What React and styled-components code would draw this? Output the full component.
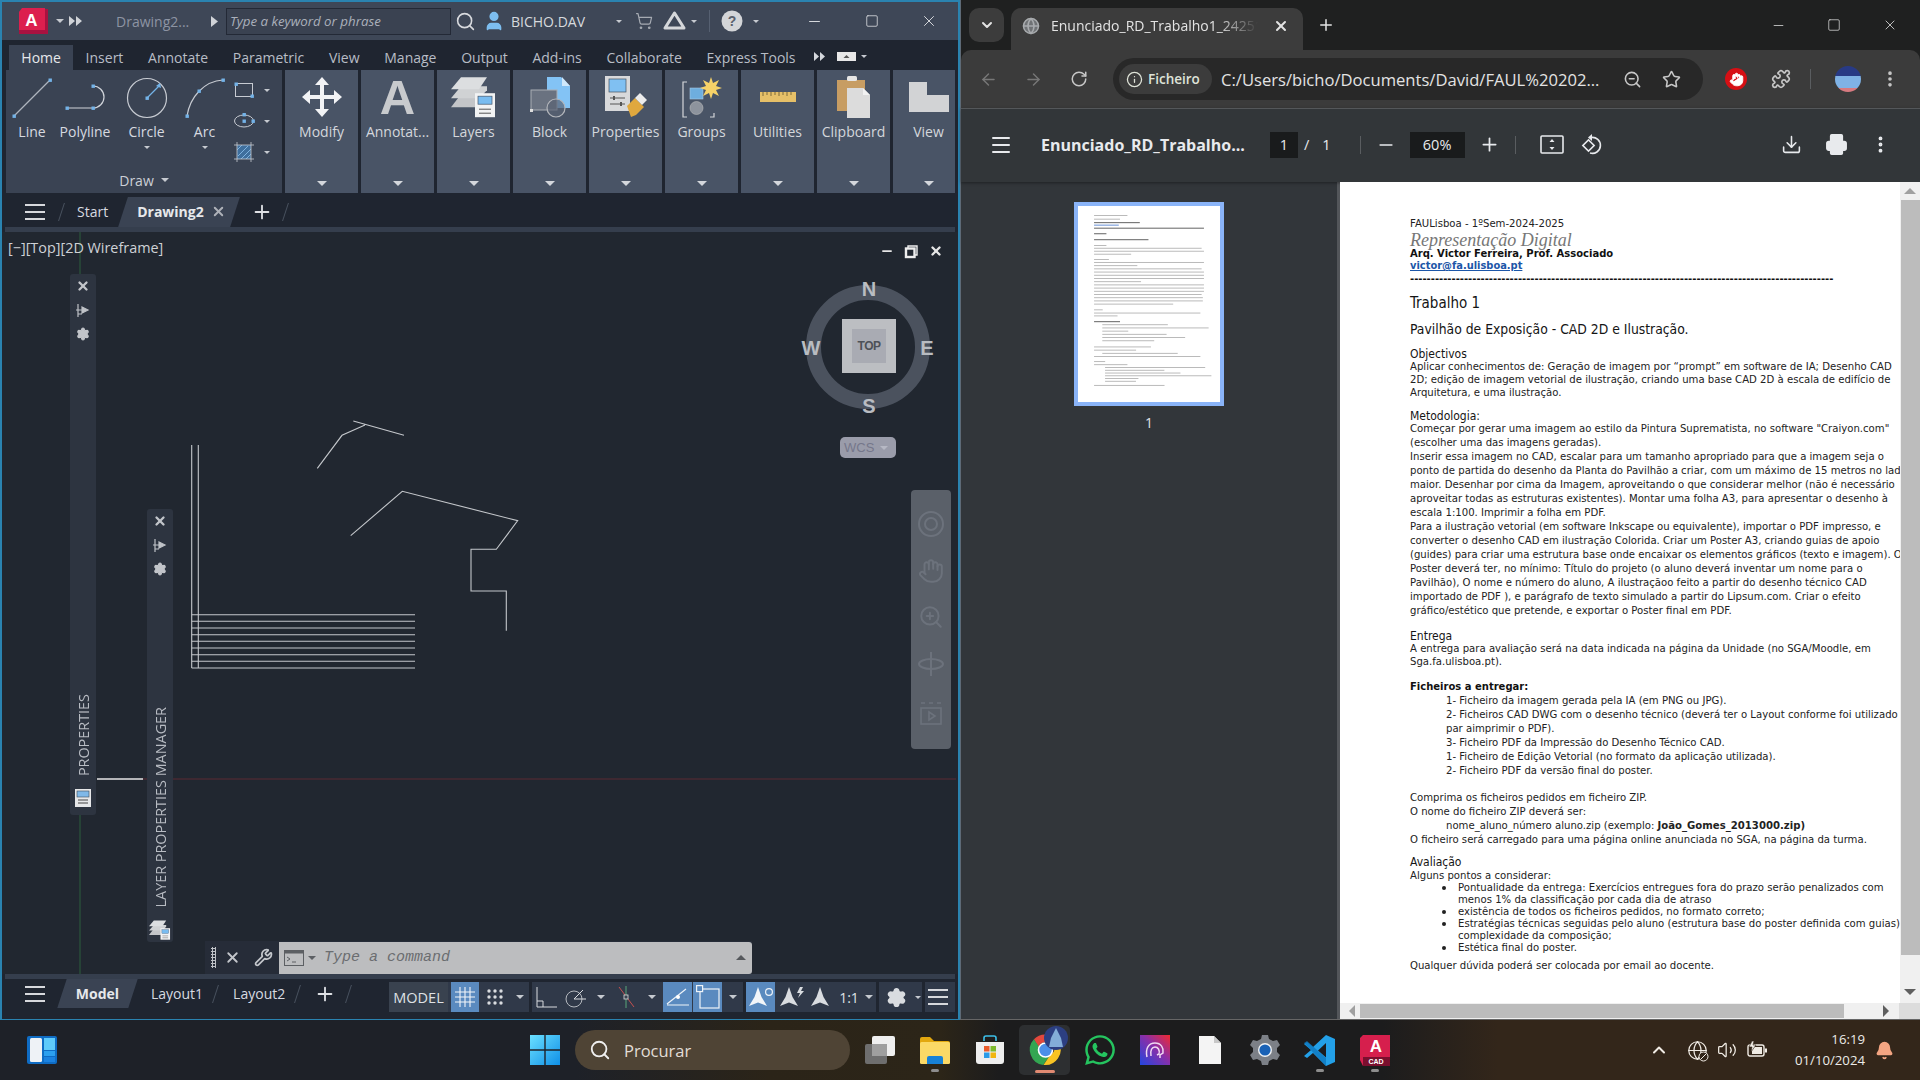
import React from "react";
import styled, { createGlobalStyle } from "styled-components";
import {
  ArrowLeft, ArrowRight, RotateCw, Info, ZoomOut, Star, Puzzle, MoreVertical, Menu, Minus, Plus, Download,
  Printer, ChevronDown, X, Search, Volume2, Bell, ChevronUp, Square, Wrench, ShoppingCart, User, Hand, ZoomIn, Settings, Globe,
} from "lucide-react";
import { FaWhatsapp } from "react-icons/fa";

const GlobalStyle = createGlobalStyle`
  html, body { margin: 0; padding: 0; background: #1e2128; overflow: hidden; }
  * { box-sizing: border-box; }
  body { font-family: "Open Sans", "Noto Sans", sans-serif; }
`;

const UI = `"Open Sans", "Noto Sans", sans-serif`;

// ---------- document text of the pdf, one entry per line ----------
const doc = [
  { t: "FAULisboa - 1ºSem-2024-2025", h: 13, mt: 35 },
  { t: "Representação Digital", h: 19, kind: "title" },
  { t: "Arq. Victor Ferreira, Prof. Associado", h: 10, kind: "bold" },
  { t: "victor@fa.ulisboa.pt", h: 13, kind: "link" },
  { t: "-".repeat(102), h: 13, kind: "bold" },
  { t: "Trabalho 1", h: 20, mt: 7.5, kind: "h0" },
  { t: "Pavilhão de Exposição - CAD 2D e Ilustração.", h: 20, mt: 6, kind: "h1" },
  { t: "Objectivos", h: 13, mt: 9.5, kind: "h2" },
  { t: "Aplicar conhecimentos de: Geração de imagem por “prompt” em software de IA; Desenho CAD", h: 13, mt: -1 },
  { t: "2D; edição de imagem vetorial de ilustração, criando uma base CAD 2D à escala de edifício de", h: 13 },
  { t: "Arquitetura, e uma ilustração.", h: 13 },
  { t: "Metodologia:", h: 14, mt: 9.5, kind: "h2" },
  { t: "Começar por gerar uma imagem ao estilo da Pintura Suprematista, no software \"Craiyon.com\"", h: 14, mt: -1 },
  { t: "(escolher uma das imagens geradas).", h: 14 },
  { t: "Inserir essa imagem no CAD, escalar para um tamanho apropriado para que a imagem seja o", h: 14 },
  { t: "ponto de partida do desenho da Planta do Pavilhão a criar, com um máximo de 15 metros no lado", h: 14 },
  { t: "maior. Desenhar por cima da Imagem, aproveitando o que considerar melhor (não é necessário", h: 14 },
  { t: "aproveitar todas as estruturas existentes). Montar uma folha A3, para apresentar o desenho à", h: 14 },
  { t: "escala 1:100. Imprimir a folha em PDF.", h: 14 },
  { t: "Para a ilustração vetorial (em software Inkscape ou equivalente), importar o PDF impresso, e", h: 14 },
  { t: "converter o desenho CAD em ilustração Colorida. Criar um Poster A3, criando guias de apoio", h: 14 },
  { t: "(guides) para criar uma estrutura base onde encaixar os elementos gráficos (texto e imagem). O", h: 14 },
  { t: "Poster deverá ter, no mínimo: Título do projeto (o aluno deverá inventar um nome para o", h: 14 },
  { t: "Pavilhão), O nome e número do aluno, A ilustraçãoo feito a partir do desenho técnico CAD", h: 14 },
  { t: "importado de PDF ), e parágrafo de texto simulado a partir do Lipsum.com. Criar o efeito", h: 14 },
  { t: "gráfico/estético que pretende, e exportar o Poster final em PDF.", h: 14 },
  { t: "Entrega", h: 14, mt: 11, kind: "h2" },
  { t: "A entrega para avaliação será na data indicada na página da Unidade (no SGA/Moodle, em", h: 12.5, mt: 0.75 },
  { t: "Sga.fa.ulisboa.pt).", h: 12.5 },
  { t: "Ficheiros a entregar:", h: 14, mt: 11.25, kind: "bold" },
  { t: "1- Ficheiro da imagem gerada pela IA (em PNG ou JPG).", h: 14, indent: 36 },
  { t: "2- Ficheiros CAD DWG com o desenho técnico (deverá ter o Layout conforme foi utilizado", h: 14, indent: 36 },
  { t: "par aimprimir o PDF).", h: 14, indent: 36 },
  { t: "3- Ficheiro PDF da Impressão do Desenho Técnico CAD.", h: 14, indent: 36 },
  { t: "1- Ficheiro de Edição Vetorial (no formato da aplicação utilizada).", h: 14, indent: 36 },
  { t: "2- Ficheiro PDF da versão final do poster.", h: 14, indent: 36 },
  { t: "Comprima os ficheiros pedidos em ficheiro ZIP.", h: 14, mt: 13 },
  { t: "O nome do ficheiro ZIP deverá ser:", h: 14 },
  { t: "nome_aluno_número aluno.zip (exemplo: ", b: "João_Gomes_2013000.zip)", h: 14, indent: 36 },
  { t: "O ficheiro será carregado para uma página online anunciada no SGA, na página da turma.", h: 14 },
  { t: "Avaliação", h: 14, mt: 8, kind: "h2" },
  { t: "Alguns pontos a considerar:", h: 13 },
  { t: "Pontualidade da entrega: Exercícios entregues fora do prazo serão penalizados com", h: 12, indent: 48, bullet: true },
  { t: "menos 1% da classificação por cada dia de atraso", h: 12, indent: 48 },
  { t: "existência de todos os ficheiros pedidos, no formato correto;", h: 12, indent: 48, bullet: true },
  { t: "Estratégias técnicas seguidas pelo aluno (estrutura base do poster definida com guias)", h: 12, indent: 48, bullet: true },
  { t: "complexidade da composição;", h: 12, indent: 48 },
  { t: "Estética final do poster.", h: 12, indent: 48, bullet: true },
  { t: "Qualquer dúvida poderá ser colocada por email ao docente.", h: 14, mt: 5 },
];

// ---------- overall frame ----------
const Desktop = styled.div`
  width: 1920px;
  height: 1080px;
  display: flex;
  flex-direction: column;
  overflow: hidden;
`;
const Windows = styled.div`
  display: flex;
  height: 1020px;
`;

// ---------- cad window ----------
const CadWindow = styled.div`
  width: 960px;
  display: flex;
  flex-direction: column;
  background: #1f2530;
  border: 2px solid #2a83b0;
  border-width: 2px 2px 1px 2px;
  color: #d5d8dd;
  font-family: ${UI};
`;
const TitleBar = styled.div`
  height: 38px;
  flex: none;
  display: flex;
  align-items: center;
  background: #3e4757;
  position: relative;
`;
const At = styled.div`
  position: relative;
  display: flex;
  align-items: center;
  flex: none;
  margin-left: ${(p) => p.$ml ?? 0}px;
  color: ${(p) => p.$c ?? "inherit"};
`;
const DocName = styled.span`
  margin-left: 33px;
  width: 76px;
  font-size: 14px;
  color: #8d94a3;
`;
const SearchBox = styled.div`
  margin-left: 8px;
  width: 225px;
  height: 27px;
  padding-left: 3px;
  border: 1px solid #232936;
  background: #3a4251;
  color: #aab0bb;
  font-size: 13.3px;
  font-style: italic;
  line-height: 24px;
  white-space: nowrap;
`;
const UserName = styled.span`
  margin-left: 6px;
  width: 102px;
  font-size: 14px;
  color: #d7dade;
`;
const Caret = styled.i`
  display: block;
  flex: none;
  width: 0;
  height: 0;
  border-left: ${(p) => p.$s ?? 4}px solid transparent;
  border-right: ${(p) => p.$s ?? 4}px solid transparent;
  border-top: ${(p) => p.$s ?? 4}px solid ${(p) => p.$c ?? "#c6cad0"};
  margin-left: ${(p) => p.$ml ?? 0}px;
  margin-top: ${(p) => p.$mt ?? 0}px;
  transform: ${(p) => (p.$up ? "rotate(180deg)" : "none")};
`;
const TitleSep = styled.i`
  display: block;
  width: 1px;
  height: 22px;
  margin-left: 12px;
  background: #566071;
`;
const RibbonTabs = styled.div`
  height: 30px;
  flex: none;
  display: flex;
  align-items: flex-end;
  padding-left: 7px;
`;
const RibbonTab = styled.div`
  height: 25px;
  padding: 0 12.35px;
  font-size: 14px;
  line-height: 25px;
  white-space: nowrap;
  color: ${(p) => (p.$on ? "#e6e8eb" : "#b8bdc6")};
  background: ${(p) => (p.$on ? "#3a4353" : "transparent")};
`;
const RibbonExtra = styled.div`
  height: 25px;
  display: flex;
  align-items: center;
  padding-bottom: ${(p) => p.$pb ?? 4}px;
`;
const Ribbon = styled.div`
  height: 124px;
  flex: none;
  display: flex;
  gap: 3px;
  padding: 0 3px 1px 4px;
`;
const DrawPanel = styled.div`
  width: 276px;
  background: #3a4353;
  display: flex;
  flex-direction: column;
  position: relative;
`;
const DrawTools = styled.div`
  flex: 1;
  display: flex;
  padding-top: 6px;
`;
const DrawTool = styled.div`
  width: ${(p) => p.$w}px;
  display: flex;
  flex-direction: column;
  align-items: center;
  font-size: 14px;
  color: #d7dae0;
  gap: 2px;
`;
const ToolIcon = styled.div`
  height: 44px;
  display: flex;
  align-items: center;
  justify-content: center;
`;
const MiniTools = styled.div`
  display: flex;
  flex-direction: column;
  gap: 9px;
  margin-left: 6px;
  padding-top: 3px;
`;
const MiniTool = styled.div`
  display: flex;
  align-items: center;
  gap: 10px;
  height: 22px;
`;
const PanelLabel = styled.div`
  height: 23px;
  display: flex;
  align-items: center;
  justify-content: center;
  gap: 7px;
  font-size: 14px;
  color: #ccd0d6;
  padding-bottom: 3px;
`;
const FlatPanel = styled.div`
  width: ${(p) => p.$w ?? 73}px;
  background: #495466;
  display: flex;
  flex-direction: column;
  align-items: center;
  padding: 5px 0 0 ${(p) => p.$pl ?? 0}px;
  font-size: 14px;
  color: #d4d7dc;
  white-space: nowrap;
`;
const FlatIcon = styled.div`
  height: 44px;
  display: flex;
  align-items: center;
  justify-content: center;
  margin-bottom: 3px;
`;
const FlatCaret = styled.div`
  margin-top: auto;
  padding-bottom: 7px;
`;
const BigLetter = styled.span`
  font: 700 49px/44px "Liberation Sans", sans-serif;
  color: #c8cacd;
`;
const DocTabs = styled.div`
  height: 33px;
  flex: none;
  display: flex;
  align-items: center;
  padding: 2px 0 0 23px;
  font-size: 14px;
`;
const BurgerIcon = styled.div`
  display: flex;
  flex-direction: column;
  gap: 5px;
  width: ${(p) => p.$w ?? 20}px;
  flex: none;
  i {
    display: block;
    height: 2px;
    background: #d6d8dc;
  }
`;
const Slash = styled.i`
  display: block;
  flex: none;
  width: 1px;
  height: 18px;
  background: #49525f;
  transform: skewX(-18deg);
  margin-left: ${(p) => p.$ml ?? 0}px;
`;
const SkewTab = styled.div`
  position: relative;
  flex: none;
  width: ${(p) => p.$w}px;
  height: ${(p) => p.$h ?? 30}px;
  margin-left: ${(p) => p.$ml ?? 0}px;
  display: flex;
  align-items: center;
  justify-content: ${(p) => (p.$center ? "center" : "flex-start")};
  padding-left: ${(p) => (p.$center ? 0 : 14)}px;
  font-size: 14px;
  color: #e6e8eb;
  font-weight: ${(p) => (p.$on ? 700 : 400)};
  &::before {
    content: "";
    position: absolute;
    inset: 0;
    background: ${(p) => (p.$on ? "#3a4353" : "transparent")};
    transform: skewX(-18deg);
  }
  > * { position: relative; }
`;
const PlainTab = styled.span`
  flex: none;
  margin-left: ${(p) => p.$ml ?? 0}px;
  color: #d7dae0;
  font-size: 14px;
`;
const Strip = styled.div`
  height: 5px;
  flex: none;
  margin: 0 3px;
  background: #353e4d;
`;

// ---------- drawing area ----------
const Viewport = styled.div`
  flex: 1;
  position: relative;
  background: #212730;
  overflow: hidden;
`;
const Drawing = styled.svg`
  position: absolute;
  inset: 0;
  width: 100%;
  height: 100%;
`;
const ViewLabel = styled.div`
  position: absolute;
  left: 6px;
  top: 6px;
  font-size: 14.4px;
  color: #cfd2d7;
`;
const ViewControls = styled.div`
  position: absolute;
  left: 878px;
  top: 12px;
  display: flex;
  gap: 11px;
  align-items: center;
  color: #e6e6e6;
`;
const CubeRing = styled.div`
  position: absolute;
  left: 804px;
  top: 53px;
  width: 124px;
  height: 124px;
  border-radius: 50%;
  border: 15px solid #4b525e;
`;
const CubeDir = styled.span`
  position: absolute;
  left: ${(p) => p.$x}px;
  top: ${(p) => p.$y}px;
  transform: translate(-50%, -50%);
  font: 700 20px "Liberation Sans", sans-serif;
  color: #b9bcc1;
`;
const CubeFace = styled.div`
  position: absolute;
  left: 840px;
  top: 87px;
  width: 54px;
  height: 54px;
  background: #bcbec2;
  display: flex;
  align-items: center;
  justify-content: center;
`;
const CubeInner = styled.div`
  width: 34px;
  height: 34px;
  background: #a9abb3;
  display: flex;
  align-items: center;
  justify-content: center;
  font: 700 12px "Liberation Sans", sans-serif;
  letter-spacing: -0.5px;
  color: #4d5158;
`;
const WcsButton = styled.div`
  position: absolute;
  left: 838px;
  top: 205px;
  width: 56px;
  height: 21px;
  background: #9a9caa;
  border-radius: 5px;
  display: flex;
  align-items: center;
  padding-left: 4px;
  gap: 6px;
  font: 13px "Liberation Sans", sans-serif;
  color: #75778a;
`;
const NavBar3d = styled.div`
  position: absolute;
  left: 909px;
  top: 258px;
  width: 40px;
  height: 259px;
  background: #5a6069;
  border-radius: 4px;
  display: flex;
  flex-direction: column;
  align-items: center;
  gap: 20px;
  padding-top: 20px;
  color: #6c727c;
`;
const Palette = styled.div`
  position: absolute;
  left: ${(p) => p.$x}px;
  top: ${(p) => p.$y}px;
  width: 26px;
  height: ${(p) => p.$h}px;
  background: #2d3440;
  border-radius: 3px;
  display: flex;
  flex-direction: column;
  align-items: center;
  color: #c2c5ca;
`;
const PaletteBtn = styled.div`
  height: 24px;
  display: flex;
  align-items: center;
  justify-content: center;
`;
const PaletteTitle = styled.div`
  margin-top: auto;
  writing-mode: vertical-rl;
  transform: rotate(180deg);
  font-size: 14.4px;
  color: #b8bcc3;
  white-space: nowrap;
`;
const PaletteFoot = styled.div`
  margin: 13px 0 ${(p) => p.$pb ?? 4}px;
  height: 22px;
`;
const CommandLine = styled.div`
  position: absolute;
  left: 203px;
  top: 709px;
  height: 33px;
  display: flex;
  align-items: center;
  background: #262c38;
  color: #c3c6cb;
`;
const Grip = styled.div`
  width: 5px;
  height: 21px;
  margin: 0 8px 0 6px;
  background-image: radial-gradient(#bfc2c7 1px, transparent 1.2px);
  background-size: 3px 3px;
`;
const CommandInput = styled.div`
  width: 473px;
  height: 32px;
  margin-left: 6px;
  background: #bcbdbf;
  display: flex;
  align-items: center;
  gap: 4px;
  padding: 0 6px 0 5px;
  border-radius: 0 3px 3px 0;
  font: italic 15px "Liberation Mono", monospace;
  color: #6b6d70;
`;
const CommandText = styled.span`
  margin-left: 4px;
  flex: 1;
`;

// ---------- status bar ----------
const StatusBar = styled.div`
  height: 40px;
  flex: none;
  display: flex;
  padding: 0 3px 0 23px;
`;
const LayoutTabs = styled.div`
  height: 29px;
  display: flex;
  align-items: center;
`;
const StatusGroups = styled.div`
  margin-left: auto;
  height: 36px;
  display: flex;
  gap: 3px;
  align-items: center;
`;
const StatusGroup = styled.div`
  display: flex;
  align-items: center;
  height: 30px;
  background: #303949;
  padding: ${(p) => p.$pad ?? "0"};
`;
const StatusCell = styled.div`
  width: ${(p) => p.$w ?? 28}px;
  height: 30px;
  flex: none;
  display: flex;
  align-items: center;
  justify-content: center;
  font-size: ${(p) => p.$fs ?? 14}px;
  color: #dfe1e5;
  background: ${(p) => (p.$on ? "#5a8abf" : p.$dark ? "#39424f" : "transparent")};
  margin-left: ${(p) => p.$ml ?? 0}px;
`;

// ---------- browser window ----------
const Browser = styled.div`
  width: 960px;
  display: flex;
  flex-direction: column;
  background: #1f2020;
  border-left: 1px solid #5e6a76;
  border-bottom: 1px solid #666;
  color: #e3e3e3;
  font-family: ${UI};
`;
const TabStrip = styled.div`
  height: 50px;
  flex: none;
  display: flex;
  padding: 8px 0 0 8px;
`;
const TabMenu = styled.div`
  width: 35px;
  height: 34px;
  border-radius: 10px;
  background: #3c3c3c;
  display: flex;
  align-items: center;
  justify-content: center;
`;
const Tab = styled.div`
  width: 292px;
  height: 42px;
  margin-left: 7px;
  border-radius: 10px 10px 0 0;
  background: #3c3c3c;
  display: flex;
  align-items: center;
  padding: 0 14px 7px 11px;
  font-size: 14px;
`;
const TabTitle = styled.span`
  margin-left: 11px;
  width: 218px;
  flex: none;
  white-space: nowrap;
  mask-image: linear-gradient(90deg, #000 76%, transparent 95%);
`;
const TabPlus = styled.div`
  height: 34px;
  margin-left: 14px;
  display: flex;
  align-items: center;
`;
const WinButtons = styled.div`
  margin-left: auto;
  display: flex;
  align-items: center;
  gap: 41px;
  padding: 0 22px 8px 0;
  color: #e6e6e6;
`;
const NavRow = styled.div`
  height: 58px;
  flex: none;
  display: flex;
  align-items: center;
  background: #3b3b3b;
  border-radius: 10px 10px 0 0;
  padding-left: 5px;
  color: #c7c7c7;
`;
const NavBtn = styled.div`
  width: ${(p) => p.$w ?? 45}px;
  flex: none;
  display: flex;
  align-items: center;
  justify-content: center;
  margin-left: ${(p) => p.$ml ?? 0}px;
  color: ${(p) => p.$c ?? "inherit"};
`;
const Omnibox = styled.div`
  width: 590px;
  height: 42px;
  margin-left: 12px;
  border-radius: 21px;
  background: #282828;
  display: flex;
  align-items: center;
  padding: 0 8px 0 6px;
`;
const SiteChip = styled.div`
  width: 93px;
  height: 30px;
  border-radius: 15px;
  background: #3c3c3c;
  display: flex;
  align-items: center;
  gap: 5px;
  padding-left: 7px;
  font-size: 13.5px;
  font-weight: 600;
  color: #dfe3d8;
`;
const UrlText = styled.span`
  margin-left: 9px;
  width: 392px;
  flex: none;
  font-size: 16.6px;
  color: #e3e3e3;
  white-space: nowrap;
`;
const ToolSep = styled.i`
  display: block;
  width: 1px;
  height: ${(p) => p.$h ?? 20}px;
  margin-left: ${(p) => p.$ml ?? 0}px;
  background: #5a5d60;
  flex: none;
`;
const Avatar = styled.div`
  width: 26px;
  height: 26px;
  margin-left: 24px;
  border-radius: 50%;
  background: linear-gradient(180deg, #283a85 0 40%, #7fb2e6 40% 85%, #d77a80 85%);
  flex: none;
`;
const StopBadge = styled.div`
  width: 22px;
  height: 22px;
  border-radius: 50%;
  background: #d60f14;
  color: #fff;
  display: flex;
  align-items: center;
  justify-content: center;
`;
const PdfBar = styled.div`
  height: 74px;
  flex: none;
  display: flex;
  align-items: center;
  background: #323639;
  border-top: 1px solid #54575a;
  box-shadow: 0 1px 3px rgba(0, 0, 0, 0.4);
  position: relative;
  color: #e8eaed;
  padding: 0 0 2px 28px;
`;
const PdfTitle = styled.span`
  margin-left: 28px;
  width: 229px;
  flex: none;
  font-size: 16px;
  font-weight: 700;
  color: #e8eaed;
  white-space: nowrap;
`;
const ValueBox = styled.span`
  width: ${(p) => p.$w}px;
  height: 26px;
  flex: none;
  margin-left: ${(p) => p.$ml ?? 0}px;
  background: #191b1c;
  display: flex;
  align-items: center;
  justify-content: center;
  font-size: 14.5px;
`;
const PdfPlain = styled.span`
  flex: none;
  font-size: 14.5px;
  margin-left: ${(p) => p.$ml}px;
`;
const PdfIcon = styled.div`
  flex: none;
  display: flex;
  margin-left: ${(p) => p.$ml}px;
  color: #e8eaed;
`;
const PdfBody = styled.div`
  flex: 1;
  display: flex;
  min-height: 0;
`;
const Sidebar = styled.div`
  width: 379px;
  flex: none;
  background: #32363a;
  display: flex;
  flex-direction: column;
  align-items: center;
  padding-top: 20px;
  border-right: 3px solid #53565a;
  color: #e0e2e4;
  font-size: 14px;
  gap: 7px;
`;
const ThumbFrame = styled.div`
  width: 150px;
  height: 204px;
  border: 4px solid #8ab4f8;
  background: #fff;
`;
const PageArea = styled.div`
  flex: 1;
  position: relative;
  overflow: hidden;
  background: #fff;
`;
const Page = styled.div`
  width: 620px;
  padding-left: 70px;
  font-family: "DejaVu Sans", Verdana, sans-serif;
  color: #222;
`;
const COND = `"DejaVu Sans Condensed", "DejaVu Sans", sans-serif`;
const kinds = {
  title: `font: italic 18px "Liberation Serif", serif; color: #777;`,
  bold: `font-weight: 700; color: #111; font-size: 10px;`,
  link: `font-weight: 700; color: #1c56a8; text-decoration: underline; font-size: 9.9px;`,
  h0: `font-family: ${COND}; font-stretch: condensed; font-size: 15px; color: #151515;`,
  h1: `font-family: ${COND}; font-stretch: condensed; font-size: 13.8px; color: #151515;`,
  h2: `font-family: ${COND}; font-stretch: condensed; font-size: 12px; color: #151515;`,
};
const DocLine = styled.div`
  height: ${(p) => p.$h}px;
  line-height: ${(p) => p.$h}px;
  margin-top: ${(p) => p.$mt ?? 0}px;
  padding-left: ${(p) => p.$indent ?? 0}px;
  position: relative;
  white-space: nowrap;
  font-size: 10.12px;
  ${(p) => kinds[p.$kind] ?? ""}
`;
const DocBullet = styled.i`
  position: absolute;
  left: 32px;
  top: 50%;
  width: 4px;
  height: 4px;
  margin-top: -2px;
  border-radius: 50%;
  background: #222;
`;
const VScroll = styled.div`
  position: absolute;
  right: 0;
  top: 0;
  bottom: 16px;
  width: 20px;
  background: #f0f0f0;
  display: flex;
  flex-direction: column;
  align-items: center;
  justify-content: space-between;
  padding: 6px 0 8px;
  &::after {
    content: "";
    position: absolute;
    left: 1px;
    right: 0;
    top: 18px;
    height: 755px;
    background: #bcbcbc;
  }
`;
const HScroll = styled.div`
  position: absolute;
  left: 0;
  right: 0;
  bottom: 0;
  height: 16px;
  background: #f0f0f0;
  display: flex;
  align-items: center;
  justify-content: space-between;
  padding: 0 31px 0 9px;
  &::after {
    content: "";
    position: absolute;
    left: 20px;
    top: 1px;
    bottom: 1px;
    width: 484px;
    background: #bcbcbc;
  }
  &::before {
    content: "";
    position: absolute;
    right: 0;
    top: 0;
    bottom: 0;
    width: 21px;
    background: #dcdcdc;
  }
`;
const Tri = styled.i`
  display: block;
  width: 0;
  height: 0;
  ${(p) => ({
    up: "border-left:6px solid transparent;border-right:6px solid transparent;border-bottom:6px solid #a0a0a0;",
    down: "border-left:6px solid transparent;border-right:6px solid transparent;border-top:6px solid #5f5f5f;",
    left: "border-top:6px solid transparent;border-bottom:6px solid transparent;border-right:6px solid #a0a0a0;",
    right: "border-top:6px solid transparent;border-bottom:6px solid transparent;border-left:6px solid #5f5f5f;",
  })[p.$dir]}
`;

// ---------- taskbar ----------
const Taskbar = styled.div`
  height: 60px;
  flex: none;
  display: flex;
  align-items: center;
  padding-left: 14px;
  background: linear-gradient(90deg, #1e2128 0%, #1e2128 30%, #2b2418 40%, #2c2518 49%, #1c1c1d 52%, #1c1c1d 72%, #33261a 78%, #33261a 100%);
  font-family: ${UI};
  color: #e8e6e3;
`;
const TaskCell = styled.div`
  position: relative;
  width: 55px;
  height: 50px;
  flex: none;
  display: flex;
  align-items: center;
  justify-content: center;
  margin-left: ${(p) => p.$ml ?? 0}px;
  margin-right: ${(p) => p.$mr ?? 0}px;
  ${(p) => p.$active && `
    &::before {
      content: "";
      position: absolute;
      inset: 0 2px;
      background: #2d2f31;
      border-radius: 5px;
    }
  `}
  > * { position: relative; }
`;
const RunDot = styled.i`
  position: absolute;
  left: 50%;
  bottom: ${(p) => (p.$active ? 2 : 3)}px;
  width: ${(p) => (p.$active ? 20 : 8)}px;
  height: 3px;
  margin-left: ${(p) => (p.$active ? -10 : -4)}px;
  border-radius: 2px;
  background: ${(p) => (p.$active ? "#e08a72" : "#8d8d8d")};
`;
const TaskSearch = styled.div`
  width: 275px;
  height: 40px;
  margin-left: 3px;
  flex: none;
  border-radius: 20px;
  background: #4f4435;
  display: flex;
  align-items: center;
  gap: 13px;
  padding-left: 14px;
  font-size: 16.5px;
  color: #e2ded7;
`;
const Tray = styled.div`
  margin-left: auto;
  display: flex;
  align-items: center;
  padding-right: 26px;
  color: #f1ece5;
`;
const Clock = styled.div`
  margin-left: 28px;
  text-align: right;
  font-size: 13.2px;
  line-height: 21px;
  color: #ecebe8;
`;
const GlobeWrap = styled.span`
  display: flex;
  position: relative;
  svg + svg {
    position: absolute;
    right: -1px;
    bottom: -1px;
  }
`;

// ---------- drawn icons ----------
const Px = styled.svg`
  display: block;
  flex: none;
  overflow: visible;
`;
const ACadLogo = () => (
  <Px width="30" height="27" viewBox="0 0 30 27">
    <path d="M3 1h26v25H0V4z" fill="#a81240" />
    <path d="M3 0h23v22H0V4z" fill="#dc1f4e" />
    <text x="12.5" y="18" fontFamily="Liberation Sans" fontWeight="700" fontSize="17" fill="#fff" textAnchor="middle">A</text>
  </Px>
);
const Handle = ({ x, y }) => <rect x={x - 1.5} y={y - 1.5} width="3.4" height="3.4" fill="#74b3e8" />;
const LineIcon = () => (
  <Px width="42" height="42" viewBox="0 0 42 42">
    <line x1="3" y1="39" x2="38" y2="4" stroke="#aeb4be" strokeWidth="1.2" />
    <Handle x={3} y={39} /><Handle x={39} y={3} />
  </Px>
);
const PolyIcon = () => (
  <Px width="42" height="42" viewBox="0 0 42 42">
    <path d="M3 31h26a11 11 0 0 0 0-22" fill="none" stroke="#d0d4da" strokeWidth="1.2" />
    <Handle x={3} y={31} /><Handle x={29} y={31} /><Handle x={29} y={9} />
  </Px>
);
const CircleIcon = () => (
  <Px width="42" height="42" viewBox="0 0 42 42">
    <circle cx="21" cy="21" r="19.5" fill="none" stroke="#c7cbd2" strokeWidth="1.2" />
    <line x1="21" y1="21" x2="34" y2="8" stroke="#74b3e8" strokeWidth="1.2" />
    <Handle x={21} y={21} /><path d="M34 6l1 5-5-2z" fill="#74b3e8" />
  </Px>
);
const ArcIcon = () => (
  <Px width="42" height="42" viewBox="0 0 42 42">
    <path d="M3 39C6 20 20 4 39 3" fill="none" stroke="#c7cbd2" strokeWidth="1.2" />
    <Handle x={3} y={39} /><Handle x={15} y={14} /><Handle x={39} y={3} />
  </Px>
);
const RectMini = () => (
  <Px width="20" height="16" viewBox="0 0 20 16">
    <rect x="1.5" y="1.5" width="17" height="13" fill="none" stroke="#c7cbd2" />
    <Handle x={2} y={2} /><Handle x={18} y={14} />
  </Px>
);
const EllipseMini = () => (
  <Px width="20" height="16" viewBox="0 0 20 16">
    <ellipse cx="10" cy="8" rx="9.5" ry="6" fill="none" stroke="#c7cbd2" />
    <Handle x={10} y={8} /><Handle x={10} y={1.5} /><Handle x={19} y={8} />
  </Px>
);
const HatchMini = () => (
  <Px width="20" height="20" viewBox="0 0 20 20">
    <rect x="3" y="3" width="14" height="14" fill="#3f6f9d" />
    <path d="M4 14L14 4M7 17L17 7M3 8L8 3M12 17l5-5" stroke="#7fb2de" strokeWidth="1" />
    <path d="M3 0v20M17 0v20M0 3h20M0 17h20" stroke="#c7cbd2" strokeWidth="0.8" />
  </Px>
);
const MoveIcon = () => (
  <Px width="40" height="40" viewBox="0 0 40 40">
    <path d="M20 0l7 8h-5v10h10v-5l8 7-8 7v-5H22v10h5l-7 8-7-8h5V22H8v5l-8-7 8-7v5h10V8h-5z" fill="#f2f3f5" />
  </Px>
);
const LayersIcon = ({ size = 46 }) => (
  <Px width={size} height={size * 0.9} viewBox="0 0 46 41">
    <path d="M0 31L10 18h26v4L28 31z" fill="#c3c5c8" />
    <path d="M0 22L10 10h26v4L28 22z" fill="#d0d2d4" />
    <path d="M0 13L10 1h26L28 13z" fill="#dcdee0" />
    <rect x="24" y="17" width="20" height="24" fill="#f2f3f4" />
    <rect x="27" y="20" width="14" height="8" fill="#79bcf0" stroke="#44556a" strokeWidth="0.7" />
    <path d="M28 33h12M28 37h12" stroke="#555" />
  </Px>
);
const BlockIcon = () => (
  <Px width="40" height="41" viewBox="0 0 40 41">
    <path d="M17 0h14l9 9v22H17z" fill="#83c3f5" />
    <path d="M32 0l8 9h-8z" fill="#cfe8fb" />
    <rect x="1" y="13" width="26" height="20" fill="#6a7280" stroke="#a9adb3" />
    <circle cx="26" cy="31" r="9" fill="#5a6373" fillOpacity="0.7" stroke="#b3b6bb" strokeWidth="1.2" />
    <rect x="0" y="32" width="3" height="3" fill="#ddd" />
  </Px>
);
const PropsIcon = () => (
  <Px width="42" height="42" viewBox="0 0 42 42">
    <rect x="0" y="0" width="25" height="35" fill="#d8d9db" />
    <rect x="4" y="3" width="17" height="13" fill="#80c0f2" stroke="#45525f" strokeWidth="0.7" />
    <path d="M5 22h15M5 28h15" stroke="#555" /><rect x="8" y="20" width="2" height="4" fill="#555" /><rect x="15" y="26" width="2" height="4" fill="#555" />
    <path d="M22 30l8-8 9 9-8 8-5 2z" fill="#e0a83e" /><path d="M30 22l5-5 7 7-5 5z" fill="#ececec" />
  </Px>
);
const GroupsIcon = () => (
  <Px width="40" height="40" viewBox="0 0 40 40">
    <path d="M5 5H1v35h4M28 40h4v-4" fill="none" stroke="#d4d6d9" strokeWidth="1.2" />
    <rect x="8" y="11" width="13" height="11" fill="#6eaede" stroke="#a4c8e4" strokeWidth="0.6" />
    <circle cx="14.5" cy="31" r="6.5" fill="#8d939d" stroke="#bbb" strokeWidth="0.6" />
    <path d="M29 0l2 6 6-3-3 6 6 2-6 2 3 6-6-3-2 6-2-6-6 3 3-6-6-2 6-2-3-6 6 3z" fill="#f6d268" />
  </Px>
);
const RulerIcon = () => (
  <Px width="36" height="10" viewBox="0 0 36 10">
    <rect width="36" height="10" fill="#e6c068" />
    <path d="M3 0v4M7 0v3M11 0v4M15 0v3M19 0v4M23 0v3M27 0v4M31 0v3" stroke="#7d6a3a" />
  </Px>
);
const ClipIcon = () => (
  <Px width="34" height="42" viewBox="0 0 34 42">
    <rect x="0" y="4" width="28" height="31" fill="#c79d63" />
    <rect x="10" y="0" width="10" height="5" rx="1.5" fill="#e6e6e6" />
    <path d="M10 12h16l7 7v23H10z" fill="#dcdcdc" /><path d="M26 12l7 7h-7z" fill="#f2f2f2" />
  </Px>
);
const ViewIcon = () => (
  <Px width="40" height="30" viewBox="0 0 40 30">
    <path d="M0 0h18v13h22v17H0z" fill="#d2d3d5" />
  </Px>
);
const ShareIcon = () => (
  <Px width="25" height="22" viewBox="0 0 25 22">
    <path d="M12.5 3L3 18h19z" fill="none" stroke="#d5d7da" strokeWidth="3" strokeLinejoin="round" />
  </Px>
);
const HelpIcon = () => (
  <Px width="22" height="22" viewBox="0 0 22 22">
    <circle cx="11" cy="11" r="10.5" fill="#d3d5d8" />
    <text x="11" y="16" fontFamily="Liberation Sans" fontWeight="700" fontSize="14" fill="#59606c" textAnchor="middle">?</text>
  </Px>
);
const Restore = () => (
  <Px width="13" height="13" viewBox="0 0 13 13">
    <path d="M3 3V1h9v9h-2" fill="none" stroke="#eee" strokeWidth="1.4" />
    <rect x="1" y="3.5" width="8.5" height="8.5" fill="none" stroke="#eee" strokeWidth="2.4" />
  </Px>
);
const GearSolid = ({ size = 14, c = "#c2c5ca" }) => <Settings size={size} color={c} fill={c} strokeWidth={2} />;
const PinIcon = () => (
  <Px width="14" height="13" viewBox="0 0 14 13">
    <path d="M2 0v13M0 6h8M6 3l6 3-6 3zM2 10h4" stroke="#bfc2c7" strokeWidth="1.2" fill="#bfc2c7" />
  </Px>
);
const SavePal = () => (
  <Px width="16" height="18" viewBox="0 0 16 18">
    <rect width="16" height="18" fill="#e6e7e9" />
    <rect x="2" y="2" width="12" height="6" fill="#7fb8e8" stroke="#3d4a58" strokeWidth="0.6" />
    <path d="M3 11h10M3 14h10" stroke="#444" />
  </Px>
);
const TermIcon = () => (
  <Px width="20" height="16" viewBox="0 0 20 16">
    <rect x="0.5" y="0.5" width="19" height="15" fill="none" stroke="#5c5f63" />
    <rect x="0.5" y="0.5" width="19" height="3" fill="#5c5f63" />
    <path d="M3 7l3 2-3 2M8 12h4" fill="none" stroke="#5c5f63" />
  </Px>
);
const GridIcon = () => (
  <Px width="20" height="20" viewBox="0 0 20 20">
    <path d="M5 0v20M10 0v20M15 0v20M0 5h20M0 10h20M0 15h20" stroke="#f2f5f9" strokeWidth="1.1" />
  </Px>
);
const DotGrid = () => (
  <Px width="16" height="16" viewBox="0 0 16 16" fill="#d9dce0">
    {[2, 8, 14].flatMap((y) => [2, 8, 14].map((x) => <circle key={`${x}-${y}`} cx={x} cy={y} r="1.7" />))}
  </Px>
);
const OrthoIcon = () => (
  <Px width="21" height="21" viewBox="0 0 21 21">
    <path d="M1 0v20h20M1 14h6v6" fill="none" stroke="#d9dce0" />
  </Px>
);
const PolarIcon = () => (
  <Px width="21" height="21" viewBox="0 0 21 21">
    <circle cx="9" cy="12" r="8" fill="none" stroke="#b5b9bf" />
    <path d="M9 12L18 3M9 12h12" stroke="#d9dce0" />
  </Px>
);
const OsnapIcon = () => (
  <Px width="17" height="22" viewBox="0 0 17 22">
    <path d="M8 0v22" stroke="#59a67a" /><path d="M1 1l15 20" stroke="#c4504f" />
    <rect x="6" y="9" width="4" height="4" fill="#39424f" stroke="#ddd" strokeWidth="0.8" />
  </Px>
);
const IsoIcon = () => (
  <Px width="24" height="20" viewBox="0 0 24 20">
    <path d="M1 17L20 2M1 18h22" stroke="#eef3f8" strokeWidth="1.2" /><circle cx="12" cy="10" r="2" fill="#fff" />
  </Px>
);
const SnapBox = () => (
  <Px width="24" height="24" viewBox="0 0 24 24">
    <rect x="4" y="4" width="19" height="19" fill="none" stroke="#eef3f8" strokeWidth="1.2" />
    <rect x="0.6" y="0.6" width="6" height="6" fill="#5a8abf" stroke="#eef3f8" strokeWidth="1.2" />
  </Px>
);
const AnnoIcon = ({ extra, c = "#d9dce0" }) => (
  <Px width="26" height="24" viewBox="0 0 26 24">
    <path d="M10 2l3.5 10L19 21l-9-3.5L1 21l5.5-9z" fill={c} />
    {extra === "circle" && <circle cx="21" cy="7" r="3.4" fill="none" stroke="#eef3f8" strokeWidth="1.2" />}
    {extra === "bolt" && <path d="M21 2l-3 6h3l-2 5 6-7h-3l2-4z" fill={c} />}
  </Px>
);
const TaskWidgets = () => (
  <Px width="30" height="28" viewBox="0 0 30 28">
    <rect width="30" height="28" rx="2" fill="#0f6cc4" />
    <rect x="3" y="2" width="12" height="24" rx="1.5" fill="#eef2f6" />
    <rect x="17" y="2" width="11" height="12" fill="#5fcbfb" />
    <rect x="17" y="15" width="11" height="5" fill="#2ca0ef" />
    <rect x="17" y="21" width="11" height="5" fill="#1b82e0" />
  </Px>
);
const StartIcon = () => (
  <Px width="30" height="30" viewBox="0 0 30 30">
    <defs>
      <linearGradient id="stg" x1="0" y1="0" x2="1" y2="1"><stop offset="0" stopColor="#6be0ff" /><stop offset="1" stopColor="#0f8fe6" /></linearGradient>
    </defs>
    <path d="M0 0h14.3v14.3H0zM15.7 0H30v14.3H15.7zM0 15.7h14.3V30H0zM15.7 15.7H30V30H15.7z" fill="url(#stg)" />
  </Px>
);
const TaskViewIcon = () => (
  <Px width="30" height="28" viewBox="0 0 30 28">
    <rect x="0" y="8" width="22" height="20" rx="2" fill="#6e6e6e" />
    <rect x="7" y="0" width="23" height="20" rx="2" fill="#efefef" />
    <rect x="7" y="8" width="15" height="12" fill="#9f9f9f" />
  </Px>
);
const FolderIcon = () => (
  <Px width="30" height="27" viewBox="0 0 30 27">
    <path d="M0 2a2 2 0 0 1 2-2h8l4 4h14a2 2 0 0 1 2 2v4H0z" fill="#e3a80f" />
    <rect y="5" width="30" height="22" rx="1.5" fill="#fbd966" />
    <path d="M7 27v-6a2 2 0 0 1 2-2h12a2 2 0 0 1 2 2v6z" fill="#1781d6" />
  </Px>
);
const StoreIcon = () => (
  <Px width="30" height="30" viewBox="0 0 30 30">
    <path d="M9 6V3a2 2 0 0 1 2-2h8a2 2 0 0 1 2 2v3" fill="none" stroke="#3cbfe8" strokeWidth="1.6" />
    <path d="M1 7h28v19a3 3 0 0 1-3 3H4a3 3 0 0 1-3-3z" fill="#eeeeee" />
    <rect x="9" y="11" width="5.5" height="5.5" fill="#ea5b2a" /><rect x="15.5" y="11" width="5.5" height="5.5" fill="#7db92c" />
    <rect x="9" y="17.5" width="5.5" height="5.5" fill="#2a9be8" /><rect x="15.5" y="17.5" width="5.5" height="5.5" fill="#f2b60f" />
  </Px>
);
const ChromeIcon = () => (
  <Px width="46" height="40" viewBox="0 0 46 40">
    <g transform="translate(7.5 -5)">
      <path d="M16 9.5a15.5 15.5 0 0 1 13.4 7.8H16a7.7 7.700 0 0 0-7 4.600L4.400 14.200A15.500 15.500 0 0 1 16 9.500z" fill="#e2483d" />
      <path d="M4.400 14.200A15.500 15.500 0 0 0 13.700 40L20.700 30a7.700 7.700 0 0 1-11-8.100z" fill="#33a652" />
      <path d="M29.400 17.300A15.500 15.500 0 0 1 14 40l6.700-10a7.700 7.700 0 0 0 1.800-12.700z" fill="#f8c324" />
      <circle cx="16" cy="25" r="7" fill="#4c8fe8" stroke="#fff" strokeWidth="1.6" />
    </g>
    <circle cx="34" cy="8" r="12" fill="#2c3f82" />
    <path d="M34 -2l5 10 2 9H27l2-9z" fill="#83add8" />
  </Px>
);
const CloakIcon = () => (
  <Px width="30" height="30" viewBox="0 0 30 30">
    <defs>
      <linearGradient id="clk" x1="0" y1="1" x2="1" y2="0"><stop offset="0" stopColor="#2246e0" /><stop offset="0.55" stopColor="#8a2fa8" /><stop offset="1" stopColor="#f0292f" /></linearGradient>
    </defs>
    <rect width="30" height="30" fill="url(#clk)" />
    <path d="M7 22c-2-9 2-14 8-14s9 5 8 10l-3 2v3M11 21c-1-6 1-9 4-9s5 3 4 7l-2 1" fill="none" stroke="#f0d9f2" strokeWidth="1.5" />
  </Px>
);
const FileIcon = () => (
  <Px width="22" height="28" viewBox="0 0 22 28">
    <path d="M0 0h15l7 7v21H0z" fill="#f4f4f4" /><path d="M15 0l7 7h-7z" fill="#c8c8c8" />
  </Px>
);
const SettingsIcon = () => (
  <Px width="32" height="32" viewBox="0 0 32 32">
    <path d="M13 1h6l1 4 4 2 4-1 3 5-3 3v4l3 3-3 5-4-1-4 2-1 4h-6l-1-4-4-2-4 1-3-5 3-3v-4L1 11l3-5 4 1 4-2z" fill="#7c8087" />
    <circle cx="16" cy="16" r="7" fill="#f0f2f4" />
    <circle cx="16" cy="16" r="5.6" fill="#1a62b6" />
  </Px>
);
const CodeIcon = () => (
  <Px width="31" height="31" viewBox="0 0 31 31">
    <path d="M22 0l9 4v23l-9 4-13-13-6 5-3-2 7-6-7-6 3-2 6 5z" fill="#23a0e8" />
    <path d="M22 8l-8 7.500 8 7z" fill="#1c1d1f" />
    <path d="M0 8l3-2 19 17v8z" fill="#0e75bc" opacity="0.75" />
  </Px>
);
const CadTaskIcon = () => (
  <Px width="30" height="31" viewBox="0 0 30 31">
    <path d="M3 0h27v25H5l-2 6-3-6V3z" fill="#d61f4d" />
    <rect x="3" y="22" width="27" height="9" fill="#7a0f2e" />
    <text x="16" y="17" fontFamily="Liberation Sans" fontWeight="700" fontSize="17" fill="#fff" textAnchor="middle">A</text>
    <text x="16" y="29" fontFamily="Liberation Sans" fontWeight="700" fontSize="7" fill="#fff" textAnchor="middle">CAD</text>
  </Px>
);
const FitIcon = () => (
  <Px width="24" height="20" viewBox="0 0 24 20">
    <rect x="1" y="1" width="22" height="17" rx="1" fill="none" stroke="#e8eaed" strokeWidth="1.6" />
    <path d="M12 4l2.500 3h-5zM12 15l-2.500-3h5z" fill="#e8eaed" />
  </Px>
);
const RotateIcon = () => (
  <Px width="24" height="24" viewBox="0 0 24 24">
    <path d="M11 4.500a8 8 0 1 1-1 15.500" fill="none" stroke="#e8eaed" strokeWidth="1.6" />
    <path d="M12 1l-4 3.500 4 3.500z" fill="#e8eaed" />
    <rect x="4.500" y="8.500" width="8" height="8" transform="rotate(45 8.500 12.500)" fill="none" stroke="#e8eaed" strokeWidth="1.6" />
  </Px>
);
const BatteryIcon = () => (
  <Px width="20" height="18" viewBox="0 0 20 18">
    <rect x="1" y="4" width="16" height="11" rx="2" fill="none" stroke="#f1ece5" strokeWidth="1.4" />
    <rect x="5" y="6" width="10" height="7" fill="#f1ece5" /><rect x="18" y="7.500" width="2" height="4" fill="#f1ece5" />
    <path d="M5 0L2 6h3l-1 5 5-7H6l1-4z" fill="#f1ece5" stroke="#33261a" strokeWidth="0.6" />
  </Px>
);
const BlockedGlobe = () => (
  <GlobeWrap>
    <Globe size={21} strokeWidth={1.4} />
    <svg width="11" height="11" viewBox="0 0 11 11">
      <circle cx="5.500" cy="5.500" r="4.500" fill="#33261a" stroke="#f1ece5" />
      <path d="M2.500 8.500l6-6" stroke="#f1ece5" />
    </svg>
  </GlobeWrap>
);

// thumbnail of the page, drawn as grey bars
const ThumbLines = () => {
  let y = 0;
  const bars = doc.map((l, i) => {
    y += (l.mt ?? 0) + l.h;
    const len = (l.t.length + (l.b ? l.b.length : 0)) * 5.4;
    const dark = l.kind === "bold" || l.kind === "h1" || l.kind === "h0";
    return (
      <rect key={i} x={70 + (l.indent ?? 0)} y={y - l.h / 2 - 2} width={Math.min(len, 480)} height={dark ? 5 : 4}
        fill={l.kind === "link" ? "#5a86d0" : dark ? "#777" : "#b4b4b4"} />
    );
  });
  return (
    <svg width="142" height="196" viewBox="0 0 620 856" aria-hidden="true">
      {bars}
    </svg>
  );
};

const Hatch = () => {
  const ys = [614.7, 621.3, 628, 634.7, 641.3, 648, 654.7, 661.3, 668];
  return ys.map((y) => <line key={y} x1="191.700" y1={y} x2="415" y2={y} stroke="#c4c7cb" strokeWidth="1.100" />);
};

const tabs = ["Home", "Insert", "Annotate", "Parametric", "View", "Manage", "Output", "Add-ins", "Collaborate", "Express Tools"];

const flat = [
  ["Modify", <MoveIcon />],
  ["Annotat...", <BigLetter>A</BigLetter>],
  ["Layers", <LayersIcon />],
  ["Block", <BlockIcon />],
  ["Properties", <PropsIcon />],
  ["Groups", <GroupsIcon />],
  ["Utilities", <RulerIcon />],
  ["Clipboard", <ClipIcon />],
];

function CadApp() {
  return (
    <CadWindow>
      <TitleBar>
        <At $ml={17}><ACadLogo /></At>
        <Caret $ml={7} $s={4} />
        <At $ml={5} $c="#d0d3d8"><svg width="14" height="10" viewBox="0 0 14 10" fill="currentColor"><path d="M0 0l6 5-6 5zM7 0l6 5-6 5z" /></svg></At>
        <DocName>Drawing2...</DocName>
        <At $ml={19}><svg width="7" height="11" viewBox="0 0 7 11" fill="#d0d3d8"><path d="M0 0l7 5.500-7 5.500z" /></svg></At>
        <SearchBox>Type a keyword or phrase</SearchBox>
        <At $ml={4} $c="#d8dade"><Search size={21} strokeWidth={1.8} /></At>
        <At $ml={7} $c="#7dbef0"><User size={22} fill="#7dbef0" strokeWidth={2} /></At>
        <UserName>BICHO.DAV</UserName>
        <Caret $ml={3} $s={3} />
        <At $ml={13} $c="#a6abb3"><ShoppingCart size={18} strokeWidth={1.6} /></At>
        <At $ml={9}><ShareIcon /></At>
        <Caret $ml={4} $s={3} />
        <TitleSep />
        <At $ml={11}><HelpIcon /></At>
        <Caret $ml={10} $s={3} />
        <At $ml={47} $c="#e4e6e9"><Minus size={17} strokeWidth={1.3} /></At>
        <At $ml={42} $c="#e4e6e9"><Square size={14} strokeWidth={1.3} /></At>
        <At $ml={41} $c="#e4e6e9"><X size={18} strokeWidth={1.2} /></At>
      </TitleBar>

      <RibbonTabs>
        {tabs.map((t, i) => <RibbonTab key={t} $on={i === 0}>{t}</RibbonTab>)}
        <RibbonExtra $pb={3}><At $ml={6} $c="#d4d7dc"><svg width="12" height="9" viewBox="0 0 12 9" fill="currentColor"><path d="M0 0l5 4.500-5 4.500zM6 0l5 4.500-5 4.500z" /></svg></At></RibbonExtra>
        <RibbonExtra $pb={3}><At $ml={11}><svg width="19" height="9" viewBox="0 0 19 9"><rect width="19" height="9" fill="#e8e8e8" /><path d="M9.500 3l3 3h-6z" fill="#555" /></svg></At></RibbonExtra>
        <RibbonExtra $pb={2}><Caret $ml={5} $s={3} /></RibbonExtra>
      </RibbonTabs>

      <Ribbon>
        <DrawPanel>
          <DrawTools>
            <DrawTool $w={52}><ToolIcon><LineIcon /></ToolIcon>Line</DrawTool>
            <DrawTool $w={54}><ToolIcon><PolyIcon /></ToolIcon>Polyline</DrawTool>
            <DrawTool $w={69}><ToolIcon><CircleIcon /></ToolIcon>Circle<Caret $s={3} $mt={3} /></DrawTool>
            <DrawTool $w={47}><ToolIcon><ArcIcon /></ToolIcon>Arc<Caret $s={3} $mt={3} /></DrawTool>
            <MiniTools>
              <MiniTool><RectMini /><Caret $s={3} /></MiniTool>
              <MiniTool><EllipseMini /><Caret $s={3} /></MiniTool>
              <MiniTool><HatchMini /><Caret $s={3} /></MiniTool>
            </MiniTools>
          </DrawTools>
          <PanelLabel>Draw <Caret $s={4} /></PanelLabel>
        </DrawPanel>
        {flat.map(([label, icon]) => (
          <FlatPanel key={label}>
            <FlatIcon>{icon}</FlatIcon>
            {label}
            <FlatCaret><Caret $s={5} $c="#d4d7dc" /></FlatCaret>
          </FlatPanel>
        ))}
        <FlatPanel $w={62} $pl={9}>
          <FlatIcon><ViewIcon /></FlatIcon>
          View
          <FlatCaret><Caret $s={5} $c="#d4d7dc" /></FlatCaret>
        </FlatPanel>
      </Ribbon>

      <DocTabs>
        <BurgerIcon><i /><i /><i /></BurgerIcon>
        <Slash $ml={16} />
        <PlainTab $ml={15}>Start</PlainTab>
        <SkewTab $on $w={112} $ml={15}><span>Drawing2</span></SkewTab>
        <At $ml={-24} $c="#aeb2b9"><X size={15} strokeWidth={3} /></At>
        <At $ml={25} $c="#dfe1e5"><Plus size={22} strokeWidth={2} /></At>
        <Slash $ml={12} />
      </DocTabs>
      <Strip />

      <Viewport>
        <Drawing viewBox="2 232 956 742">
          <line x1="80" y1="232" x2="80" y2="974" stroke="#2d5f3d" strokeWidth="1" />
          <line x1="143" y1="779" x2="956" y2="779" stroke="#5c2b33" strokeWidth="1" />
          <line x1="97" y1="779" x2="143" y2="779" stroke="#e6e6e6" strokeWidth="1.400" />
          <g fill="none" stroke="#c4c7cb" strokeWidth="1.100">
            <path d="M191.700 445V668M198.300 445V668" />
            <Hatch />
            <path d="M317.300 468.300L342 435.300L365 425M353.300 421L404 435.300" />
            <path d="M350.700 535.700L402.300 491.300L517.700 520.700L496.300 549.300H471V591H506.300V630.700" />
          </g>
        </Drawing>
        <ViewLabel>[−][Top][2D Wireframe]</ViewLabel>
        <ViewControls>
          <Minus size={14} strokeWidth={3} />
          <Restore />
          <X size={14} strokeWidth={4} />
        </ViewControls>
        <CubeRing />
        <CubeDir $x={867} $y={57}>N</CubeDir>
        <CubeDir $x={867} $y={174}>S</CubeDir>
        <CubeDir $x={925} $y={116}>E</CubeDir>
        <CubeDir $x={809} $y={116}>W</CubeDir>
        <CubeFace><CubeInner>TOP</CubeInner></CubeFace>
        <WcsButton>WCS <Caret $s={4} $c="#b6b8c4" /></WcsButton>
        <NavBar3d>
          <svg width="28" height="28" viewBox="0 0 28 28" fill="none" stroke="currentColor" strokeWidth="2"><circle cx="14" cy="14" r="12" /><circle cx="14" cy="14" r="6" /></svg>
          <Hand size={26} strokeWidth={1.8} />
          <ZoomIn size={26} strokeWidth={1.8} />
          <svg width="28" height="28" viewBox="0 0 28 28" fill="none" stroke="currentColor" strokeWidth="2"><ellipse cx="14" cy="14" rx="12" ry="5" /><path d="M14 2v24" /></svg>
          <svg width="24" height="30" viewBox="0 0 24 30" fill="none" stroke="currentColor" strokeWidth="1.600"><rect x="2" y="10" width="20" height="16" /><path d="M10 14l6 4-6 4zM2 5h4M10 5h4M18 5h4" /></svg>
        </NavBar3d>

        <Palette $x={68} $y={42} $h={541}>
          <PaletteBtn><X size={14} strokeWidth={4} /></PaletteBtn>
          <PaletteBtn><PinIcon /></PaletteBtn>
          <PaletteBtn><GearSolid /></PaletteBtn>
          <PaletteTitle>PROPERTIES</PaletteTitle>
          <PaletteFoot><SavePal /></PaletteFoot>
        </Palette>
        <Palette $x={145} $y={277} $h={433}>
          <PaletteBtn><X size={14} strokeWidth={4} /></PaletteBtn>
          <PaletteBtn><PinIcon /></PaletteBtn>
          <PaletteBtn><GearSolid /></PaletteBtn>
          <PaletteTitle>LAYER PROPERTIES MANAGER</PaletteTitle>
          <PaletteFoot $pb={0}><LayersIcon size={22} /></PaletteFoot>
        </Palette>

        <CommandLine>
          <Grip />
          <X size={17} strokeWidth={2.600} />
          <At $ml={13}><Wrench size={19} strokeWidth={2.200} /></At>
          <CommandInput>
            <TermIcon />
            <Caret $s={4} $c="#5c5f63" />
            <CommandText>Type a command</CommandText>
            <Caret $s={5} $c="#55585c" $up />
          </CommandInput>
        </CommandLine>
      </Viewport>
      <Strip />

      <StatusBar>
        <LayoutTabs>
          <BurgerIcon><i /><i /><i /></BurgerIcon>
          <SkewTab $on $w={71} $h={29} $ml={17} $center><span>Model</span></SkewTab>
          <PlainTab $ml={18}>Layout1</PlainTab>
          <Slash $ml={12} />
          <PlainTab $ml={17}>Layout2</PlainTab>
          <Slash $ml={12} />
          <At $ml={16} $c="#dfe1e5"><Plus size={22} strokeWidth={2} /></At>
          <Slash $ml={12} />
        </LayoutTabs>
        <StatusGroups>
          <StatusGroup>
            <StatusCell $w={59} $dark $fs={14.5}>MODEL</StatusCell>
            <StatusCell $on $w={28} $ml={3}><GridIcon /></StatusCell>
            <StatusCell $w={32}><DotGrid /></StatusCell>
            <StatusCell $w={18}><Caret $s={4} /></StatusCell>
          </StatusGroup>
          <StatusGroup>
            <StatusCell $w={29}><OrthoIcon /></StatusCell>
            <StatusCell $w={29}><PolarIcon /></StatusCell>
            <StatusCell $w={21}><Caret $s={4} /></StatusCell>
            <StatusCell $w={30}><OsnapIcon /></StatusCell>
            <StatusCell $w={22}><Caret $s={4} /></StatusCell>
            <StatusCell $on $w={29}><IsoIcon /></StatusCell>
            <StatusCell $on $w={29} $ml={1}><SnapBox /></StatusCell>
            <StatusCell $w={21}><Caret $s={4} /></StatusCell>
          </StatusGroup>
          <StatusGroup>
            <StatusCell $on $w={29}><AnnoIcon extra="circle" c="#f2f5f9" /></StatusCell>
            <StatusCell $w={34}><AnnoIcon extra="bolt" /></StatusCell>
            <StatusCell $w={28}><AnnoIcon /></StatusCell>
            <StatusCell $w={24} $fs={14}>1:1</StatusCell>
            <StatusCell $w={15}><Caret $s={4} /></StatusCell>
          </StatusGroup>
          <StatusGroup>
            <StatusCell $w={34}><GearSolid size={21} c="#d9dce0" /></StatusCell>
            <StatusCell $w={9}><Caret $s={3} /></StatusCell>
          </StatusGroup>
          <StatusGroup $pad="0 7px 0 3px">
            <BurgerIcon $w={20}><i /><i /><i /></BurgerIcon>
          </StatusGroup>
        </StatusGroups>
      </StatusBar>
    </CadWindow>
  );
}

function ChromeApp() {
  return (
    <Browser>
      <TabStrip>
        <TabMenu><ChevronDown size={16} strokeWidth={3} /></TabMenu>
        <Tab>
          <Globe size={18} color="#a8abae" fill="#6f7275" strokeWidth={2} />
          <TabTitle>Enunciado_RD_Trabalho1_24251</TabTitle>
          <At $ml={4}><X size={16} strokeWidth={3} /></At>
        </Tab>
        <TabPlus><Plus size={18} strokeWidth={2} /></TabPlus>
        <WinButtons>
          <Minus size={15} strokeWidth={1.200} />
          <Square size={14} strokeWidth={1.200} />
          <X size={16} strokeWidth={1.200} />
        </WinButtons>
      </TabStrip>
      <NavRow>
        <NavBtn $c="#777"><ArrowLeft size={19} strokeWidth={1.800} /></NavBtn>
        <NavBtn $c="#777"><ArrowRight size={19} strokeWidth={1.800} /></NavBtn>
        <NavBtn><RotateCw size={18} strokeWidth={2} /></NavBtn>
        <Omnibox>
          <SiteChip><Info size={17} strokeWidth={1.800} />Ficheiro</SiteChip>
          <UrlText>C:/Users/bicho/Documents/David/FAUL%20202...</UrlText>
          <NavBtn $w={38} $c="#c7c7c7"><ZoomOut size={19} strokeWidth={2} /></NavBtn>
          <NavBtn $w={40} $c="#c7c7c7"><Star size={19} strokeWidth={2} /></NavBtn>
        </Omnibox>
        <NavBtn $w={32} $ml={17}><StopBadge><Hand size={15} fill="#fff" strokeWidth={1.500} /></StopBadge></NavBtn>
        <NavBtn $w={58}><Puzzle size={20} strokeWidth={2} /></NavBtn>
        <ToolSep $h={20} />
        <Avatar />
        <NavBtn $w={44} $c="#c7c7c7" $ml={7}><MoreVertical size={20} strokeWidth={2.400} /></NavBtn>
      </NavRow>
      <PdfBar>
        <Menu size={24} strokeWidth={2} />
        <PdfTitle>Enunciado_RD_Trabalho...</PdfTitle>
        <ValueBox $w={28}>1</ValueBox>
        <PdfPlain $ml={6}>/</PdfPlain>
        <PdfPlain $ml={13}>1</PdfPlain>
        <ToolSep $h={18} $ml={29} />
        <PdfIcon $ml={15}><Minus size={20} strokeWidth={2} /></PdfIcon>
        <ValueBox $w={55} $ml={14}>60%</ValueBox>
        <PdfIcon $ml={14}><Plus size={21} strokeWidth={2} /></PdfIcon>
        <ToolSep $h={18} $ml={15} />
        <PdfIcon $ml={24}><FitIcon /></PdfIcon>
        <PdfIcon $ml={16}><RotateIcon /></PdfIcon>
        <PdfIcon $ml={177}><Download size={21} strokeWidth={1.800} /></PdfIcon>
        <PdfIcon $ml={23}><Printer size={23} fill="#e8eaed" strokeWidth={1.800} /></PdfIcon>
        <PdfIcon $ml={22}><MoreVertical size={21} strokeWidth={2.400} /></PdfIcon>
      </PdfBar>
      <PdfBody>
        <Sidebar>
          <ThumbFrame><ThumbLines /></ThumbFrame>
          1
        </Sidebar>
        <PageArea>
          <Page>
            {doc.map((l, i) => (
              <DocLine key={i} $h={l.h} $mt={l.mt} $indent={l.indent} $kind={l.kind}>
                {l.bullet && <DocBullet />}
                {l.t}{l.b && <b>{l.b}</b>}
              </DocLine>
            ))}
          </Page>
          <VScroll><Tri $dir="up" /><Tri $dir="down" /></VScroll>
          <HScroll><Tri $dir="left" /><Tri $dir="right" /></HScroll>
        </PageArea>
      </PdfBody>
    </Browser>
  );
}

export default function App() {
  return (
    <>
      <GlobalStyle />
      <Desktop>
        <Windows>
          <CadApp />
          <ChromeApp />
        </Windows>
        <Taskbar>
          <TaskCell $mr={448}><TaskWidgets /></TaskCell>
          <TaskCell><StartIcon /></TaskCell>
          <TaskSearch><Search size={22} strokeWidth={2} color="#efefef" />Procurar</TaskSearch>
          <TaskCell $ml={2}><TaskViewIcon /></TaskCell>
          <TaskCell><FolderIcon /><RunDot /></TaskCell>
          <TaskCell><StoreIcon /></TaskCell>
          <TaskCell $active><ChromeIcon /><RunDot $active /></TaskCell>
          <TaskCell><FaWhatsapp size={34} color="#25c45f" /></TaskCell>
          <TaskCell><CloakIcon /></TaskCell>
          <TaskCell><FileIcon /></TaskCell>
          <TaskCell><SettingsIcon /></TaskCell>
          <TaskCell><CodeIcon /><RunDot /></TaskCell>
          <TaskCell><CadTaskIcon /><RunDot /></TaskCell>
          <Tray>
            <ChevronUp size={20} strokeWidth={2.400} />
            <At $ml={18}><BlockedGlobe /></At>
            <At $ml={9}><Volume2 size={20} strokeWidth={1.500} /></At>
            <At $ml={10}><BatteryIcon /></At>
            <Clock>16:19<br />01/10/2024</Clock>
            <At $ml={10}><Bell size={19} color="#f4a582" fill="#f4a582" /></At>
          </Tray>
        </Taskbar>
      </Desktop>
    </>
  );
}
